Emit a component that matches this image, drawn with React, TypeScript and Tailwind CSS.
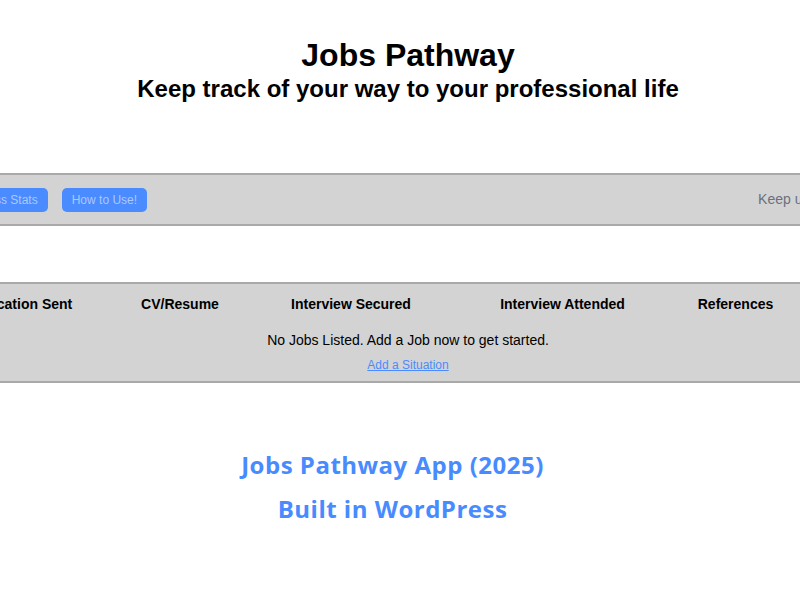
import React from "react";

const cols = [
  { label: "Application Sent", w: "w-[202px]" },
  { label: "CV/Resume", w: "w-[124px]" },
  { label: "Interview Secured", w: "w-[218px]" },
  { label: "Interview Attended", w: "w-[205px]" },
  { label: "References", w: "w-[141px]" },
];

export default function App() {
  return (
    <div className="min-h-screen w-full overflow-hidden bg-white font-['Liberation_Sans',Arial,sans-serif] text-black">
      <header className="pt-[37px] pl-4 text-center">
        <h1 className="text-[32px] font-bold leading-[37px]">Jobs Pathway</h1>
        <h2 className="mt-px text-[24px] font-bold leading-[28px]">
          Keep track of your way to your professional life
        </h2>
      </header>

      <nav className="mt-[70px] flex h-[53px] items-center border-y-2 border-[#a9a9a9] bg-[#d3d3d3]">
        <div className="-ml-[51px] flex shrink-0 items-center gap-[14px]">
          <button className="h-6 shrink-0 rounded-[5px] bg-[#4a8bff] px-[10px] text-[12px] leading-6 text-[#a9c9ff]">
            Progress Stats
          </button>
          <button className="h-6 shrink-0 rounded-[5px] bg-[#4a8bff] px-[10px] text-[12px] leading-6 text-[#a9c9ff]">
            How to Use!
          </button>
        </div>
        <span className="ml-[611px] shrink-0 whitespace-nowrap text-[14px] text-[#6b7080]">
          Keep up with your progress!
        </span>
      </nav>

      <section className="mt-[56px] border-y-2 border-[#a9a9a9] bg-[#d3d3d3] pb-[9px]">
        <div className="-ml-[84px] flex py-[12px]">
          {cols.map((c) => (
            <div
              key={c.label}
              className={`${c.w} shrink-0 whitespace-nowrap text-center text-[14px] font-bold leading-4`}
            >
              {c.label}
            </div>
          ))}
        </div>
        <p className="mt-2 pl-4 text-center text-[14px] leading-4">
          No Jobs Listed. Add a Job now to get started.
        </p>
        <p className="mt-[10px] pl-4 text-center text-[12px] leading-[14px]">
          <a href="#" className="text-[#4a8bff] underline">
            Add a Situation
          </a>
        </p>
      </section>

      <footer className="flex flex-col items-center gap-2 pt-[64px] pr-[15px] font-['Open_Sans',sans-serif] text-[24px] font-bold leading-[36px] tracking-[0.5px] text-[#478bff]">
        <p>Jobs Pathway App (2025)</p>
        <p>Built in WordPress</p>
      </footer>
    </div>
  );
}
